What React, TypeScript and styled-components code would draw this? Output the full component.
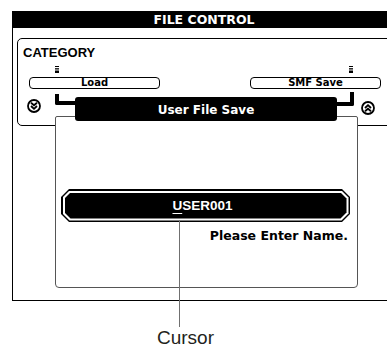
import React from "react";
import styled, { createGlobalStyle } from "styled-components";

const GlobalStyle = createGlobalStyle`
  html, body {
    margin: 0;
    padding: 0;
    background: #fff;
    overflow: hidden;
  }
  body {
    font-family: "Liberation Sans", Arial, sans-serif;
    color: #000;
  }
`;

const Page = styled.div`
  position: relative;
  width: 387px;
  height: 347px;
  padding-top: 11px;
  box-sizing: border-box;
  overflow: hidden;
`;

const Frame = styled.section`
  margin-left: 12px;
  width: 404px;
  border: 1.5px solid #000;
  border-top: 0;
  padding-bottom: 12px;
  box-sizing: border-box;
`;

const TitleBar = styled.header`
  margin: 0 -1.5px;
  padding-right: 20px;
  height: 17px;
  background: #000;
  color: #fff;
  display: flex;
  align-items: center;
  justify-content: center;
  font-family: "DejaVu Sans", sans-serif;
  font-weight: 700;
  font-size: 12.5px;
  line-height: 17px;
`;

const CategoryBox = styled.div`
  margin: 10px 0 0 3.5px;
  width: 392px;
  border: 1.5px solid #000;
  border-radius: 5px;
  padding: 7px 0 11.5px;
  box-sizing: border-box;
`;

const CategoryLabel = styled.div`
  margin-left: 5.5px;
  font-weight: 700;
  font-size: 13px;
  line-height: 13px;
`;

const Tabs = styled.div`
  display: flex;
  gap: 90px;
  padding-left: 11.5px;
`;

const Tab = styled.div<{ $end?: boolean }>`
  width: 131px;
  display: flex;
  flex-direction: column;
  align-items: ${({ $end }) => ($end ? "flex-end" : "flex-start")};
`;

const Indicator = styled.svg<{ $end?: boolean }>`
  display: block;
  margin-top: 6.5px;
  margin-left: ${({ $end }) => ($end ? "0" : "26px")};
  margin-right: ${({ $end }) => ($end ? "28px" : "0")};
`;

const TabButton = styled.div`
  align-self: stretch;
  margin-top: 4px;
  height: 12.5px;
  border: 1.5px solid #000;
  border-radius: 4px;
  box-sizing: border-box;
  display: flex;
  align-items: center;
  justify-content: center;
  font-family: "DejaVu Sans", sans-serif;
  font-weight: 700;
  font-size: 10px;
  line-height: 9px;
`;

const ArrowRow = styled.div`
  width: 348px;
  height: 14px;
  margin: 10px 0 0 9.5px;
  display: flex;
  justify-content: space-between;
  align-items: center;
`;

const ScrollIcon = styled.svg<{ $up?: boolean }>`
  display: block;
  transform: ${({ $up }) => ($up ? "rotate(180deg) translateY(-2px)" : "none")};
`;

const Panel = styled.div`
  position: relative;
  z-index: 1;
  margin: -9.5px 0 0 41.5px;
  width: 303px;
  height: 172px;
  border: 1.5px solid #555;
  border-radius: 2px 2px 4px 4px;
  background: #fff;
  box-sizing: border-box;
`;

const DialogTitle = styled.div`
  position: relative;
  margin: -20px 19.5px 0;
  height: 24px;
  border-radius: 3px;
  background: #000;
  color: #fff;
  display: flex;
  align-items: center;
  justify-content: center;
  padding-top: 2px;
  box-sizing: border-box;
  font-family: "DejaVu Sans", sans-serif;
  font-weight: 700;
  font-size: 12px;

  &::before {
    content: "";
    position: absolute;
    right: 100%;
    top: -3px;
    width: 20px;
    height: 11px;
    border-left: 4px solid #000;
    border-bottom: 4px solid #000;
    border-bottom-left-radius: 2px;
    box-sizing: border-box;
  }

  &::after {
    content: "";
    position: absolute;
    left: 100%;
    top: -5px;
    width: 17px;
    height: 14px;
    border-right: 4px solid #000;
    border-bottom: 4px solid #000;
    border-bottom-right-radius: 2px;
    box-sizing: border-box;
  }
`;

const chamfer = (c: number) =>
  `polygon(${c}px 0, calc(100% - ${c}px) 0, 100% ${c}px, 100% calc(100% - ${c}px), calc(100% - ${c}px) 100%, ${c}px 100%, 0 calc(100% - ${c}px), 0 ${c}px)`;

const FieldOutline = styled.div`
  margin: 68px 6.5px 0 5.5px;
  height: 33px;
  padding: 1.5px;
  background: #000;
  clip-path: ${chamfer(8)};
  box-sizing: border-box;
`;

const FieldGap = styled.div`
  height: 100%;
  padding: 2px;
  background: #fff;
  clip-path: ${chamfer(7)};
  box-sizing: border-box;
`;

const FieldFill = styled.div`
  height: 100%;
  background: #000;
  clip-path: ${chamfer(6)};
  color: #fff;
  display: flex;
  align-items: center;
  justify-content: center;
  padding-right: 6px;
  font-weight: 700;
  font-size: 13.5px;
  line-height: 13.5px;
`;

const CursorChar = styled.span`
  text-decoration: underline;
  text-decoration-thickness: 1px;
  text-underline-offset: 3px;
`;

const Prompt = styled.div`
  margin-top: 7px;
  padding-right: 8.5px;
  text-align: right;
  font-family: "DejaVu Sans", sans-serif;
  font-weight: 700;
  font-size: 12.5px;
  line-height: 14px;
`;

const CursorLine = styled.div`
  position: absolute;
  z-index: 2;
  left: 179px;
  top: 220px;
  width: 1px;
  height: 107px;
  background: #707070;
`;

const Caption = styled.div`
  margin: 26.5px 0 0 157px;
  font-size: 19px;
  line-height: 19px;
  color: #231f20;
`;

const IndicatorGlyph = ({ end }: { end?: boolean }) => (
  <Indicator $end={end} width="4" height="7" viewBox="0 0 4 7">
    <rect x="0" y="0" width="4" height="1" fill="#000" />
    <rect x="0" y="2.2" width="4" height="1.3" fill="#000" />
    <rect x="0" y="4.5" width="4" height="2.5" fill="#000" />
  </Indicator>
);

const Scroll = ({ up }: { up?: boolean }) => (
  <ScrollIcon $up={up} width="14" height="14" viewBox="0 0 14 14">
    <circle cx="7" cy="7" r="6" fill="none" stroke="#000" strokeWidth="1.8" />
    <path
      d="M4 3.8 L7 6.3 L10 3.8 M4 7 L7 9.8 L10 7"
      fill="none"
      stroke="#000"
      strokeWidth="1.8"
      strokeLinejoin="miter"
    />
  </ScrollIcon>
);

export default function App() {
  return (
    <Page>
      <GlobalStyle />
      <Frame>
        <TitleBar>FILE CONTROL</TitleBar>
        <CategoryBox>
          <CategoryLabel>CATEGORY</CategoryLabel>
          <Tabs>
            <Tab>
              <IndicatorGlyph />
              <TabButton>Load</TabButton>
            </Tab>
            <Tab $end>
              <IndicatorGlyph end />
              <TabButton>SMF Save</TabButton>
            </Tab>
          </Tabs>
          <ArrowRow>
            <Scroll />
            <Scroll up />
          </ArrowRow>
        </CategoryBox>
        <Panel>
          <DialogTitle>User File Save</DialogTitle>
          <FieldOutline>
            <FieldGap>
              <FieldFill>
                <CursorChar>U</CursorChar>SER001
              </FieldFill>
            </FieldGap>
          </FieldOutline>
          <Prompt>Please Enter Name.</Prompt>
        </Panel>
      </Frame>
      <CursorLine />
      <Caption>Cursor</Caption>
    </Page>
  );
}
